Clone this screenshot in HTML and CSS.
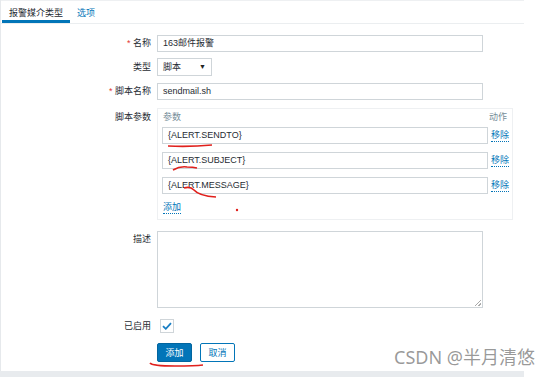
FILE: index.html
```html
<!DOCTYPE html>
<html>
<head>
<meta charset="utf-8">
<title>报警媒介类型</title>
<link rel="stylesheet" href="styles.css">
</head>
<body>
<div class="page">
  <div class="tabs">
    <span class="tab active">报警媒介类型</span>
    <span class="tab">选项</span>
  </div>

  <div class="form">
    <div class="row r-name">
      <label class="lbl"><span class="req">*</span> 名称</label>
      <div class="field"><div class="input wide">163邮件报警</div></div>
    </div>
    <div class="row r-type">
      <label class="lbl">类型</label>
      <div class="field"><div class="select">脚本<span class="caret">▼</span></div></div>
    </div>
    <div class="row r-script">
      <label class="lbl"><span class="req">*</span> 脚本名称</label>
      <div class="field"><div class="input wide">sendmail.sh</div></div>
    </div>
    <div class="row r-params">
      <label class="lbl">脚本参数</label>
      <div class="field">
        <div class="params">
          <div class="phead"><span>参数</span><span>动作</span></div>
          <div class="prow"><div class="input pinput">{ALERT.SENDTO}</div><a class="link">移除</a></div>
          <div class="prow"><div class="input pinput">{ALERT.SUBJECT}</div><a class="link">移除</a></div>
          <div class="prow"><div class="input pinput">{ALERT.MESSAGE}</div><a class="link">移除</a></div>
          <a class="link add">添加</a>
        </div>
      </div>
    </div>
    <div class="row r-desc">
      <label class="lbl">描述</label>
      <div class="field"><div class="textarea"><span class="grip"></span></div></div>
    </div>
    <div class="row r-enabled">
      <label class="lbl">已启用</label>
      <div class="field">
        <span class="check">
          <svg width="10" height="8" viewBox="0 0 10 8"><path d="M1 4.2 L3.8 6.8 L9 1.2" fill="none" stroke="#1a7fc4" stroke-width="1.8"/></svg>
        </span>
      </div>
    </div>
    <div class="row r-buttons">
      <span class="lbl"></span>
      <div class="field buttons">
        <button class="btn primary">添加</button>
        <button class="btn">取消</button>
      </div>
    </div>
  </div>

  <svg class="marks" width="553" height="377" viewBox="0 0 553 377">
    <path d="M168 146 Q190 147 212 145" fill="none" stroke="#e0201c" stroke-width="1.6"/>
    <path d="M173 170 Q180 166 187 167 Q193 167 197 168" fill="none" stroke="#e0201c" stroke-width="1.6"/>
    <path d="M184 188 Q190 186 194 190 Q199 196 216 197" fill="none" stroke="#e0201c" stroke-width="1.6"/>
    <circle cx="237" cy="210" r="1.2" fill="#e0201c"/>
    <path d="M150 363 Q152 366 175 366 Q195 366 203 365" fill="none" stroke="#e0201c" stroke-width="1.6"/>
  </svg>

  <div class="watermark">CSDN @半月清悠</div>
</div>
<div class="footer"></div>
</body>
</html>
```

FILE: styles.css
```css
body {
  margin: 0;
  background: #fff;
  font-family: "Liberation Sans", "Noto Sans CJK SC", Arial, sans-serif;
  font-size: 9px;
  color: #1f2c33;
}
.page {
  position: relative;
  width: 523px;
  height: 371px;
  border-left: 1px solid #e6e9ec;
  background: #fff;
}
.footer {
  width: 524px;
  height: 6px;
  background: #e8ebee;
}
.tabs {
  display: flex;
  height: 22px;
  border-top: 1px solid #eef0f2;
  border-bottom: 1px solid #ebeef0;
  padding-left: 1px;
}
.tab {
  display: flex;
  align-items: center;
  padding: 0 7px;
  color: #0275b8;
  white-space: nowrap;
}
.tab.active {
  color: #1f2c33;
  border-bottom: 3px solid #0275b8;
  padding: 3px 7px 0;
}
.form {
  padding-top: 11px;
}
.row {
  display: flex;
  align-items: flex-start;
}
.lbl {
  width: 150px;
  flex-shrink: 0;
  text-align: right;
  padding-right: 6px;
  color: #1f2c33;
  line-height: 17px;
  white-space: nowrap;
}
.req {
  color: #e33734;
}
.field {
  flex: 1;
}
.input {
  box-sizing: border-box;
  height: 17px;
  border: 1px solid #cfd5d9;
  background: #fff;
  padding: 0 5px;
  line-height: 15px;
  color: #1f2c33;
  white-space: nowrap;
}
.wide {
  width: 326px;
}
.r-type { margin-top: 6px; }
.r-type .lbl { line-height: 18px; }
.select {
  box-sizing: border-box;
  width: 55px;
  height: 18px;
  border: 1px solid #cfd5d9;
  padding: 0 5px;
  display: flex;
  justify-content: space-between;
  line-height: 16px;
}
.caret {
  font-size: 7px;
  color: #222;
}
.r-script { margin-top: 7px; }
.r-params { margin-top: 8px; }
.r-params .lbl { line-height: 18px; }
.params {
  box-sizing: border-box;
  width: 356px;
  height: 112px;
  border: 1px solid #eef0f2;
  padding: 0 4px;
}
.phead {
  display: flex;
  justify-content: space-between;
  color: #768d99;
  line-height: 17px;
  padding: 0 1px;
  margin-bottom: 1px;
}
.prow {
  display: flex;
  align-items: center;
  gap: 3px;
  margin-bottom: 8px;
}
.pinput {
  flex-shrink: 0;
  width: 326px;
  height: 17px;
  line-height: 15px;
}
.link {
  color: #0275b8;
  border-bottom: 1px dotted #0275b8;
  line-height: 11px;
  white-space: nowrap;
}
.add {
  display: inline-block;
  margin-left: 1px;
}
.r-desc { margin-top: 11px; }
.r-desc .lbl { line-height: 16px; }
.textarea {
  position: relative;
  box-sizing: border-box;
  width: 326px;
  height: 77px;
  border: 1px solid #cfd5d9;
}
.grip {
  position: absolute;
  right: 1px;
  bottom: 1px;
  width: 6px;
  height: 6px;
  background: linear-gradient(135deg, transparent 45%, #aaa 45%, #aaa 55%, transparent 55%, transparent 75%, #aaa 75%, #aaa 85%, transparent 85%);
}
.r-enabled { margin-top: 11px; }
.r-enabled .lbl { line-height: 14px; }
.check {
  box-sizing: border-box;
  display: flex;
  align-items: center;
  justify-content: center;
  width: 14px;
  height: 14px;
  margin-left: 3px;
  border: 1px solid #cfd5d9;
}
.r-buttons { margin-top: 10px; }
.buttons {
  display: flex;
  gap: 8px;
}
.btn {
  box-sizing: border-box;
  width: 35px;
  height: 19px;
  padding: 0;
  font-family: "Liberation Sans", "Noto Sans CJK SC", sans-serif;
  font-size: 9px;
  background: #fff;
  border: 1px solid #0275b8;
  color: #0275b8;
  border-radius: 2px;
}
.btn.primary {
  background: #0275b8;
  color: #fff;
  border-color: #02659f;
}
.marks {
  position: absolute;
  left: -1px;
  top: 0;
  pointer-events: none;
}
.watermark {
  position: absolute;
  left: 393px;
  top: 343px;
  font-family: "Noto Sans", "Noto Sans CJK SC", sans-serif;
  font-size: 18px;
  color: rgba(120, 120, 120, 0.75);
  white-space: nowrap;
}
```
